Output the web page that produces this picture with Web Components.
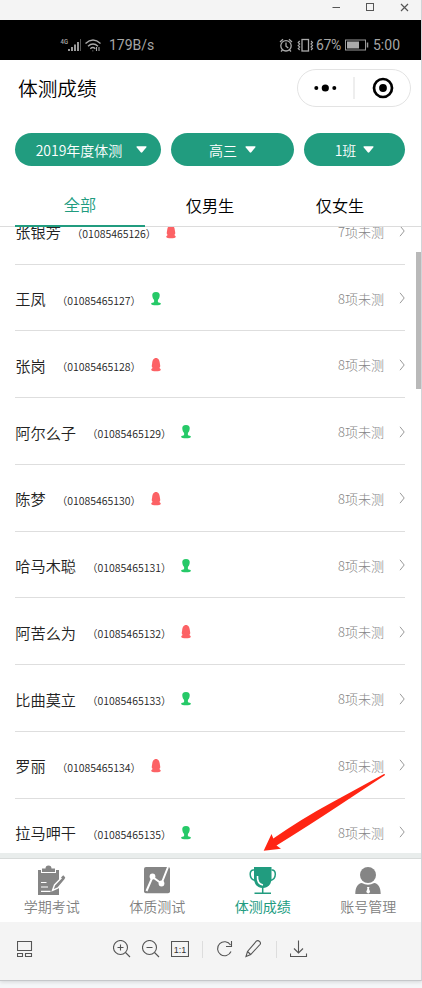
<!DOCTYPE html>
<html lang="zh-CN">
<head>
<meta charset="UTF-8">
<title>体测成绩</title>
<style>
    body {
        margin: 0;
        height: 988px;
        overflow: hidden;
        background: #f4f6f8;
        font-family: 'Noto Sans CJK SC', sans-serif;
        font-weight: 350;
    }
</style>
</head>
<body>
<viewer-window>
    <window-bar slot="top"></window-bar>
    <phone-screen>
        <status-bar></status-bar>
        <nav-header>体测成绩</nav-header>
        <filter-bar>
            <filter-pill style="width:146px;--gap:14px;padding-left:7px">2019年度体测</filter-pill>
            <filter-pill style="width:123.5px;--gap:8px">高三</filter-pill>
            <filter-pill style="width:101px;--gap:7px">1班</filter-pill>
        </filter-bar>
        <tab-list>
            <tab-item active>全部</tab-item>
            <tab-item>仅男生</tab-item>
            <tab-item>仅女生</tab-item>
        </tab-list>
        <student-list></student-list>
        <bottom-nav></bottom-nav>
    </phone-screen>
    <viewer-toolbar slot="bottom"></viewer-toolbar>
</viewer-window>
<pointer-arrow></pointer-arrow>

<script>
'use strict';

function define(name, html) {
    window.customElements.define(name, class extends HTMLElement {
        constructor() {
            super();
            this.attachShadow({mode: 'open'});
            this.shadowRoot.innerHTML = html;
        }
    });
}

define('viewer-window', `
    <slot name="top"></slot>
    <slot></slot>
    <slot name="bottom"></slot>
    <style>
    :host {
        display: flex;
        flex-direction: column;
        width: 420.500px;
        height: 980px;
        background: #fff;
        border-right: 1px solid #d2d4d7;
        border-bottom: 1px solid #c5c7ca;
        box-shadow: 0 1px 4px #0002;
    }
    </style>
`);

define('window-bar', `
    <svg width="84" height="20" viewBox="330 0 84 20" fill="none" stroke="#555">
        <path d="M332.500 7.500h7.500"/>
        <rect x="366.500" y="3.500" width="7" height="7"/>
        <path d="M401 4l7 7M408 4l-7 7" stroke-width="1.2"/>
    </svg>
    <style>
    :host {
        display: flex;
        justify-content: flex-end;
        height: 20px;
        padding-right: 6.500px;
        background: #f4f4f4;
    }
    </style>
`);

define('phone-screen', `
    <slot></slot>
    <style>
    :host {
        display: flex;
        flex-direction: column;
        height: 902px;
        overflow: hidden;
    }
    </style>
`);

define('status-bar', `
    <div class="group left">
        <svg width="44" height="20" viewBox="60 34 44 20" fill="none" stroke="#aaa">
            <text x="60.500" y="43" font-size="7.500" font-weight="500" fill="#aaa" stroke="none" textLength="7.500" lengthAdjust="spacingAndGlyphs">4G</text>
            <path d="M69 50v-2M72 50v-4M75 50v-6.500M78 50v-9" stroke-width="1.8"/>
            <path d="M80.500 50v-12" stroke="#555"/>
            <g stroke-width="1.4">
                <path d="M85.500 42.500q7.500-7 15 0M88 45.200q5-4.500 10 0M90.300 47.700q2.500-2.200 5 0"/>
                <path d="M92.800 49.500v.8M96.500 46v4M99 46v4" stroke-width="1.1"/>
            </g>
        </svg>
        <span>179B/s</span>
    </div>
    <div class="group">
        <svg width="36" height="20" viewBox="278 34 36 20" fill="none" stroke="#aaa" stroke-width="1.3">
            <circle cx="285" cy="44.800" r="5.200"/>
            <path d="M285 41.500v3.800l2.300 1.800M279 41l3-2.700M291 41l-3-2.700M281.500 49l-1.500 1.500M288.500 49l1.500 1.500"/>
            <rect x="301" y="38.500" width="6.500" height="11.500"/>
            <path d="M298.700 40l-1.500 1.500 1.500 1.500-1.500 1.500 1.500 1.500-1.500 1.500 1.500 1.500M310 40l1.500 1.500-1.500 1.500 1.500 1.500-1.500 1.500 1.500 1.500-1.500 1.500" stroke-width="1.1"/>
        </svg>
        <span class="pct">67%</span>
        <svg width="24" height="12" viewBox="0 0 24 12">
            <rect x=".5" y="1" width="20" height="10" fill="none" stroke="#999"/>
            <path d="M2 2.500h12v7H2z" fill="#aaa"/>
            <path d="M22.500 3.500v5" stroke="#999" stroke-width="1.5"/>
        </svg>
        <span class="time">5:00</span>
    </div>
    <style>
    :host {
        display: flex;
        justify-content: space-between;
        height: 40px;
        padding: 5px 20.500px 0 60px;
        box-sizing: border-box;
        background: #000;
        color: #a6a6a6;
        font: 14px/40px Roboto, sans-serif;
    }
    .group { display: flex; align-items: center; height: 40px; }
    .group svg { flex: none; }
    .left span { margin-left: 5px; }
    .pct { width: 29px; margin-left: 1.500px; letter-spacing: -.4px; }
    .time { margin-left: 4px; }
    </style>
`);

define('nav-header', `
    <slot></slot>
    <svg width="114" height="38" viewBox="0 0 114 38">
        <rect x=".5" y=".5" width="113" height="37" rx="18.500" fill="#fff" stroke="#e3e3e3"/>
        <path d="M57 8v22" stroke="#ddd"/>
        <circle cx="19.300" cy="19" r="2"/>
        <circle cx="28.300" cy="19" r="3.600"/>
        <circle cx="37.300" cy="19" r="2"/>
        <circle cx="86" cy="19" r="9" fill="none" stroke="#000" stroke-width="2.700"/>
        <circle cx="86" cy="19" r="3.900"/>
    </svg>
    <style>
    :host {
        display: flex;
        justify-content: space-between;
        align-items: center;
        height: 56px;
        padding: 0 10px 0 18px;
        color: #000;
        font-size: 19.700px;
        line-height: 30px;
    }
    </style>
`);

define('filter-bar', `
    <slot></slot>
    <style>
    :host {
        display: flex;
        justify-content: space-between;
        padding: 17.400px 15.500px 0 15px;
    }
    </style>
`);

define('filter-pill', `
    <slot></slot>
    <svg width="11" height="7"><path d="M1 .3h9q1 0 .4.900L6.300 6.300q-.8.900-1.600 0L.6 1.200Q0 .3 1 .3z" fill="#fff"/></svg>
    <style>
    :host {
        display: flex;
        align-items: center;
        justify-content: center;
        height: 33px;
        box-sizing: border-box;
        border-radius: 17px;
        background: #219c7f;
        color: #fff;
        font-size: 14px;
    }
    svg { margin-left: var(--gap); }
    </style>
`);

define('tab-list', `
    <slot></slot>
    <style>
    :host {
        display: flex;
        height: 60.600px;
        padding: 0 15.500px 0 15px;
        border-bottom: 1px solid #dcdcdc;
        box-sizing: border-box;
        flex: none;
    }
    </style>
`);

define('tab-item', `
    <slot></slot>
    <style>
    :host {
        flex: 1;
        height: 60.600px;
        box-sizing: border-box;
        padding-top: 19.600px;
        color: #000;
        font-size: 16.200px;
        line-height: 39px;
        text-align: center;
    }
    :host([active]) {
        padding-top: 18.600px;
        border-bottom: 2px solid #219c7f;
        color: #219c7f;
    }
    </style>
`);

const students = [
    ['张银芳', '01085465126', 'f', 7],
    ['王凤', '01085465127', 'm', 8],
    ['张岗', '01085465128', 'f', 8],
    ['阿尔么子', '01085465129', 'm', 8],
    ['陈梦', '01085465130', 'f', 8],
    ['哈马木聪', '01085465131', 'm', 8],
    ['阿苦么为', '01085465132', 'f', 8],
    ['比曲莫立', '01085465133', 'm', 8],
    ['罗丽', '01085465134', 'f', 8],
    ['拉马呷干', '01085465135', 'm', 8]
];

const genderIcons = {
    m: '<path d="M5 0C7.800 0 9 1.500 8.700 3.800 8.500 6 7.600 7.200 6.900 8V10C7.500 10.800 9.900 10.600 9.900 11.800 9.900 13 7.500 13.300 5 13.300S.1 13 .1 11.800C.1 10.600 2.500 10.800 3.100 10V8C2.400 7.200 1.500 6 1.300 3.800 1 1.500 2.200 0 5 0z" fill="#26c968"/>',
    f: '<path d="M5 0C7.500 0 8.600 2.500 8.800 5 9 7 9.900 8.500 8.500 9.700 7.900 10.200 9.900 10.600 9.800 11.800 9.700 13 7.500 13.300 5 13.300S.3 13 .2 11.800C.1 10.600 2.100 10.200 1.500 9.700.1 8.500 1 7 1.200 5 1.400 2.500 2.500 0 5 0z" fill="#fc6265"/>'
};

class StudentRow extends HTMLElement {
    constructor() {
        super();
        this.attachShadow({mode: 'open'});
    }

    connectedCallback() {
        const gender = this.getAttribute('gender');
        this.shadowRoot.innerHTML = `
        <slot></slot>
        <span class="id">（${this.getAttribute('number')}）</span>
        <svg class="gender" width="10" height="14">${genderIcons[gender]}</svg>
        <span class="left">${this.getAttribute('left')}项未测</span>
        <svg width="6" height="12"><path d="M1 .8L5.200 6 1 11.200" fill="none" stroke="#999"/></svg>

        <style>
        :host {
            display: flex;
            align-items: center;
            height: 66.750px;
            box-sizing: border-box;
            padding-top: 1.200px;
            border-bottom: 1px solid #dedede;
            color: #222;
            font-size: 15.200px;
        }
        .id { margin: 4px 0 0 11px; font-size: 10.500px; }
        .gender { margin: 1px auto 0 9.700px; }
        .left { margin-right: 15px; color: #858585; font-size: 13px; font-weight: 300; }
        </style>
        `;
    }
}

window.customElements.define('student-row', StudentRow);

class StudentList extends HTMLElement {
    constructor() {
        super();
        this.attachShadow({mode: 'open'});
        const rows = students.map(s =>
            `<student-row number="${s[1]}" gender="${s[2]}" left="${s[3]}">${s[0]}</student-row>`
        ).join('');
        this.shadowRoot.innerHTML = `
        <div class="rows">${rows}</div>
        <div class="track"><div class="thumb"></div></div>

        <style>
        :host {
            display: flex;
            height: 626px;
            overflow: hidden;
            flex: none;
        }
        .rows { flex: 1; margin-top: -29px; padding-left: 15.300px; }
        .track { width: 15.500px; display: flex; justify-content: flex-end; padding-top: 25px; }
        .thumb { width: 4.500px; height: 137px; background: #b9b9b9; }
        </style>
        `;
    }
}

window.customElements.define('student-list', StudentList);

define('nav-item', `
    <slot name="icon"></slot>
    <slot></slot>
    <style>
    :host {
        flex: 1;
        display: flex;
        flex-direction: column;
        align-items: center;
        color: #808080;
        font-size: 14px;
        line-height: 21px;
    }
    :host([active]) { color: #219c7f; font-weight: 400; }
    </style>
`);

define('bottom-nav', `
    <nav>
        <nav-item>
            <svg slot="icon" width="30" height="32" viewBox="37 864 30 32">
                <path d="M38 870h3v3h15v-3h3v25H38z" fill="#858585"/>
                <path d="M42 868.500h3.500a3 3 0 0 1 6 0H55v3.500H42z" fill="#858585"/>
                <path d="M41 882.500h5.500M41 887h7M41 891.300h9.500" stroke="#fff" stroke-width="1.200"/>
                <path d="M63 876.300l-8.500 8.700-2 5.500 5.500-2.500 8-9.500z" fill="#858585" stroke="#fff" stroke-width="1.400"/>
                <path d="M62 878.500l2.300-2.100" stroke="#858585" stroke-width="3"/>
            </svg>
            学期考试
        </nav-item>
        <nav-item>
            <svg slot="icon" width="30" height="32" viewBox="142 864 30 32">
                <rect x="144" y="867" width="26" height="26.300" rx="2" fill="#858585"/>
                <path d="M146.500 891l6-14 9 6.500 6.500-16.500" fill="none" stroke="#fff" stroke-width="2"/>
                <circle cx="152.500" cy="876.500" r="2.900" fill="#fff"/>
                <circle cx="161.500" cy="883.500" r="2.900" fill="#fff"/>
            </svg>
            体质测试
        </nav-item>
        <nav-item active>
            <svg slot="icon" width="30" height="32" viewBox="248 864 30 32">
                <path d="M254 867h17.500v12q0 5-4.500 8-4.300 2-8.500 0-4.500-3-4.500-8z" fill="#219c7f"/>
                <path d="M254 870c-5-1-5.500 9 1 10.500M271.500 870c5-1 5.500 9-1 10.500M262.700 887v6.500M254.500 893.300h16.500" fill="none" stroke="#219c7f" stroke-width="1.500"/>
                <path d="M257.500 876q-.5 8 5.500 9" fill="none" stroke="#fff" stroke-width="1.600"/>
            </svg>
            体测成绩
        </nav-item>
        <nav-item>
            <svg slot="icon" width="30" height="32" viewBox="353 864 30 32">
                <circle cx="368" cy="875" r="8" fill="#858585"/>
                <path d="M355.300 894c0-6.500 2.500-10.500 6.500-11q6.200 3.500 12.400 0c4 .5 6.500 4.500 6.500 11z" fill="#858585"/>
                <path d="M367 887h2.500l-.5 1.700 1.200 3.300-2 1.800-2-1.800 1.200-3.300z" fill="#fff"/>
            </svg>
            账号管理
        </nav-item>
    </nav>
    <style>
    :host {
        display: block;
        height: 69px;
        box-sizing: border-box;
        border-top: 5px solid #e9edec;
        flex: none;
    }
    nav {
        display: flex;
        width: 422px;
        margin-left: -1px;
        border-top: 1px solid #d8dbda;
        padding-top: 5px;
    }
    </style>
`);

define('viewer-toolbar', `
    <svg class="layout" width="16" height="16" viewBox="17 941 16 16"><path d="M17.500 941.500h14v9h-14zM17.500 953.500h5v3h-5zM25.500 953.500h6v3h-6z"/></svg>
    <svg width="18" height="18" viewBox="113 940 18 18"><circle cx="120.500" cy="947.500" r="7"/><path d="M117.500 947.500h6M120.500 944.500v6M125.500 952.500l4.500 4.500"/></svg>
    <svg width="18" height="18" viewBox="142 940 18 18"><circle cx="149.500" cy="947.500" r="7"/><path d="M146.500 947.500h6M154.500 952.500l4.500 4.500"/></svg>
    <svg width="18" height="18" viewBox="171 940 18 18"><path d="M171.500 941.500h17v15h-17z"/><text x="180" y="952.600" font-size="9" text-anchor="middle">1:1</text></svg>
    <i></i>
    <svg width="18" height="18" viewBox="216 940 18 18"><path d="M230.500 945A7 7 0 1 0 231 951.500M226 946.500h5.500v-5.500"/></svg>
    <svg width="18" height="18" viewBox="245 940 18 18"><path d="M246 956.500l1.500-5 9-10.500q1.500-1 3 .3t.7 3l-9.500 10.200zM247.500 951.500l3.200 3"/></svg>
    <i></i>
    <svg width="18" height="18" viewBox="290 940 18 18"><path d="M298.500 940.500v12M294 948.500l4.500 4.500 4.500-4.500M290.500 953.500v3h16v-3"/></svg>
    <style>
    :host {
        display: flex;
        align-items: center;
        gap: 11px;
        height: 58px;
        padding: 0 0 4px 17px;
        box-sizing: border-box;
        background: #f4f4f4;
    }
    svg { fill: none; stroke: #555; stroke-width: 1.100; }
    svg text { fill: #333; stroke: none; font-family: 'Liberation Sans', sans-serif; font-weight: 400; }
    .layout { margin-right: 69px; }
    i { width: 1px; height: 17px; background: #ddd; margin: 0 2px; }
    </style>
`);

// annotation drawn over the list, pointing at the active nav item
define('pointer-arrow', `
    <svg width="126" height="80" viewBox="262 772 126 80"><path d="M263.700 850.700L271.500 834l1.800 4.500Q303 818 330 803.500L384 774q1.500 0 .8 1.200L336 807.500Q308 826 276.500 845.500l4.500 3.200z" fill="#ff2513"/></svg>
    <style>
    :host { position: absolute; left: 262px; top: 772px; line-height: 0; }
    </style>
`);
</script>
</body>
</html>
